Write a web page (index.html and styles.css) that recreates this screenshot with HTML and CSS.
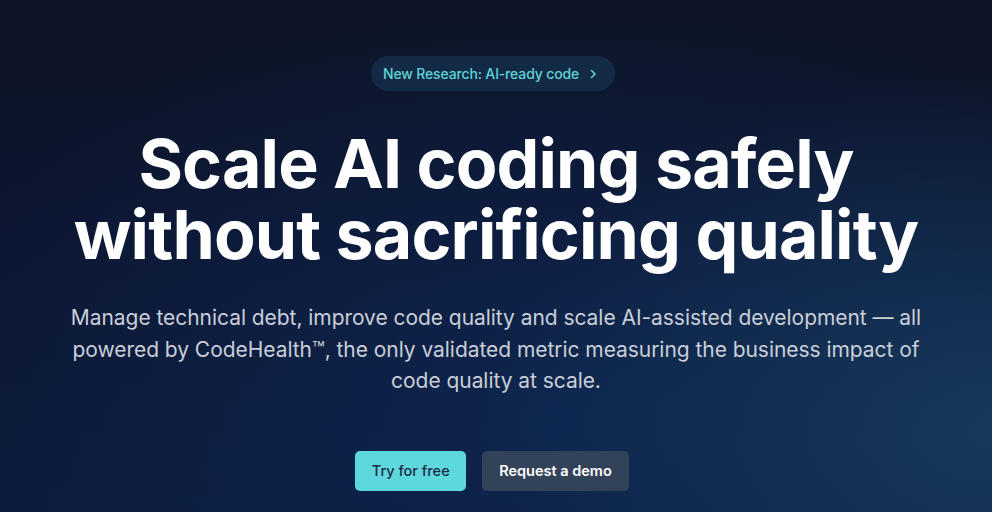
FILE: index.html
```html
<!DOCTYPE html>
<html lang="en">
<head>
<meta charset="utf-8">
<title>Scale AI coding safely</title>
<link rel="stylesheet" href="styles.css">
</head>
<body>
<main class="hero">
  <a class="badge" href="#">New Research: AI-ready code
    <svg class="chev" width="12" height="12" viewBox="0 0 12 12" aria-hidden="true"><path d="M4.5 2.5 8 6l-3.5 3.5" fill="none" stroke="currentColor" stroke-width="1.6" stroke-linecap="round" stroke-linejoin="round"/></svg>
  </a>
  <h1 class="title">Scale AI coding safely<br>without sacrificing quality</h1>
  <p class="lead">Manage technical debt, improve code quality and scale AI-assisted development — all powered by CodeHealth™, the only validated metric measuring the business impact of code quality at scale.</p>
  <div class="actions">
    <a class="btn btn-primary" href="#">Try for free</a>
    <a class="btn btn-secondary" href="#">Request a demo</a>
  </div>
</main>
</body>
</html>
```
FILE: styles.css
```css
* { box-sizing: border-box; }
html, body { margin: 0; height: 100%; }
body {
  font-family: Inter, "Noto Sans", sans-serif;
  background: #0e1425;
  overflow: hidden;
}
.hero {
  height: 512px;
  display: flex;
  flex-direction: column;
  align-items: center;
  padding-top: 56px;
  background:
    radial-gradient(ellipse 520px 360px at 1000px 430px, rgba(24,62,98,0.85), rgba(24,62,98,0) 100%),
    radial-gradient(ellipse 700px 420px at 560px 420px, rgba(14,38,80,0.9), rgba(14,38,80,0) 100%),
    linear-gradient(180deg, #0e1425 0%, #0c1530 50%, #0c1a38 100%);
}
.badge {
  display: inline-flex;
  align-items: center;
  gap: 8px;
  height: 35px;
  padding: 0 16px 0 12px;
  margin-right: 6px;
  border-radius: 18px;
  background: #132a47;
  color: #5fd3d6;
  font-size: 14px;
  font-weight: 500;
  text-decoration: none;
  letter-spacing: -0.15px;
}
.chev { margin-top: 1px; }
.title {
  margin: 37px 0 0;
  color: #ffffff;
  font-size: 68px;
  font-weight: 700;
  line-height: 71px;
  letter-spacing: -0.85px;
  text-align: center;
}
.lead {
  margin: 32px 0 0;
  width: 880px;
  color: #c9ced8;
  font-size: 21px;
  line-height: 31.5px;
  text-align: center;
  letter-spacing: -0.05px;
}
.actions {
  display: flex;
  gap: 16px;
  margin-top: 54px;
  margin-right: 8px;
}
.btn {
  display: inline-flex;
  align-items: center;
  justify-content: center;
  height: 40px;
  border-radius: 5px;
  font-size: 14.5px;
  font-weight: 600;
  text-decoration: none;
}
.btn-primary { background: #5dd8dc; color: #1b2a47; font-weight: 500; padding: 0 16.5px; }
.btn-secondary { background: #324259; color: #ffffff; padding: 0 17px; }
```
